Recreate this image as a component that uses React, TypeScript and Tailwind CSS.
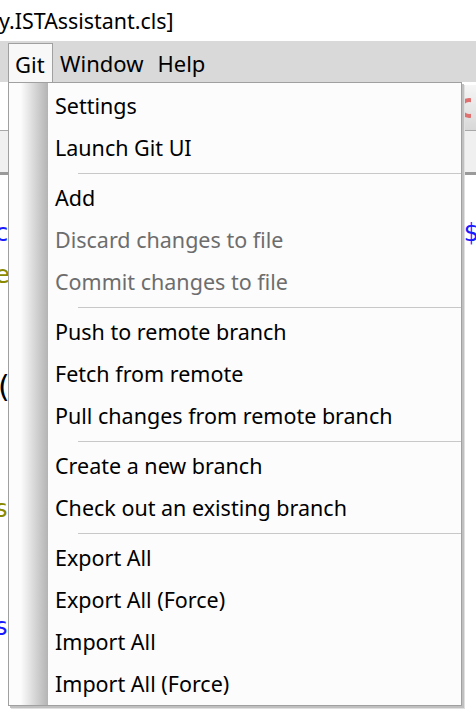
import React from 'react'

type Item = { label: string; disabled?: boolean } | 'sep'

const ITEMS: Item[] = [
  { label: 'Settings' },
  { label: 'Launch Git UI' },
  'sep',
  { label: 'Add' },
  { label: 'Discard changes to file', disabled: true },
  { label: 'Commit changes to file', disabled: true },
  'sep',
  { label: 'Push to remote branch' },
  { label: 'Fetch from remote' },
  { label: 'Pull changes from remote branch' },
  'sep',
  { label: 'Create a new branch' },
  { label: 'Check out an existing branch' },
  'sep',
  { label: 'Export All' },
  { label: 'Export All (Force)' },
  { label: 'Import All' },
  { label: 'Import All (Force)' },
]

const FONT = "font-['Noto_Sans','Open_Sans',sans-serif]"

export default function App() {
  return (
    <div className={`relative w-[476px] h-[718px] overflow-hidden bg-white text-black ${FONT}`}>
      {/* window title */}
      <div className="h-[41px] flex items-center text-[21.4px] leading-none -ml-[1px]">y.ISTAssistant.cls]</div>

      {/* menu bar */}
      <div className="h-[41px] bg-[#d9d9d9] flex items-end text-[22px] leading-none">
        <div className="ml-[8px] h-[39px] w-[45px] border border-b-0 border-[#a0a0a0] bg-[#f8f8f8] flex items-center pl-[6px] pt-[1px]">
          Git
        </div>
        <div className="h-[39px] flex items-center pt-[1px] pl-[7px]">Window</div>
        <div className="h-[39px] flex items-center pt-[1px] pl-[14px]">Help</div>
      </div>

      {/* editor behind the menu */}
      <div className="flex flex-col">
        <div className="h-[48px] flex justify-end items-start">
          <div className="mt-[3px] w-[22px] h-[45px] bg-linear-to-b from-[#f6f6f6] to-[#d8d8d8] border-l border-[#c8c8c8] flex items-center justify-start pl-[2px]">
            <svg width="14" height="22" viewBox="0 0 14 22">
              <circle cx="12" cy="11" r="8" fill="none" stroke="#e07070" strokeWidth="4" />
            </svg>
          </div>
        </div>
        <div className="h-[45px] bg-[#f0f0f0] border-t border-[#a8a8a8] border-b-[3px] border-b-[#9a9a9a]" />
        <div className="text-[24px] leading-none font-['DejaVu_Sans',sans-serif]">
          <div className="h-[37px]" />
          <div className="h-[42px] flex items-center justify-between">
            <span className="text-[#1a1aff] -ml-[5px]">c</span>
            <span className="text-[#1a1aff] -mr-[3px]">$</span>
          </div>
          <div className="h-[42px] flex items-center">
            <span className="text-[#8a8a00] -ml-[5px]">e</span>
          </div>
          <div className="h-[70px]" />
          <div className="h-[42px] flex items-center">
            <span className="-ml-[2px] text-[30px]">(</span>
          </div>
          <div className="h-[80px]" />
          <div className="h-[42px] flex items-center">
            <span className="text-[#8a8a00] -ml-[5px]">s</span>
          </div>
          <div className="h-[76px]" />
          <div className="h-[42px] flex items-center">
            <span className="text-[#1a1aff] -ml-[5px]">s</span>
          </div>
        </div>
      </div>

      {/* dropdown */}
      <div className="absolute left-[8px] top-[82px] w-[454px] h-[624px] bg-[#fcfcfc] border border-[#a0a0a0] shadow-[2px_2px_0_#c0c0c0,3px_3px_0_#e0e0e0] flex">
        <div className="w-[39px] shrink-0 bg-linear-to-r from-[#fcfcfc] from-30% to-[#b4b4b4]" />
        <div className="flex-1 flex flex-col pt-[2px] text-[21.5px] leading-none">
          {ITEMS.map((it, i) =>
            it === 'sep' ? (
              <div key={i} className="h-[8px] flex items-center pl-[30px]">
                <div className="h-px flex-1 bg-[#c8c8c8]" />
              </div>
            ) : (
              <div
                key={i}
                className={`h-[42px] flex items-center pl-[7px] ${it.disabled ? 'text-[#6d6d6d]' : 'text-black'}`}
              >
                {it.label}
              </div>
            ),
          )}
        </div>
      </div>
    </div>
  )
}
